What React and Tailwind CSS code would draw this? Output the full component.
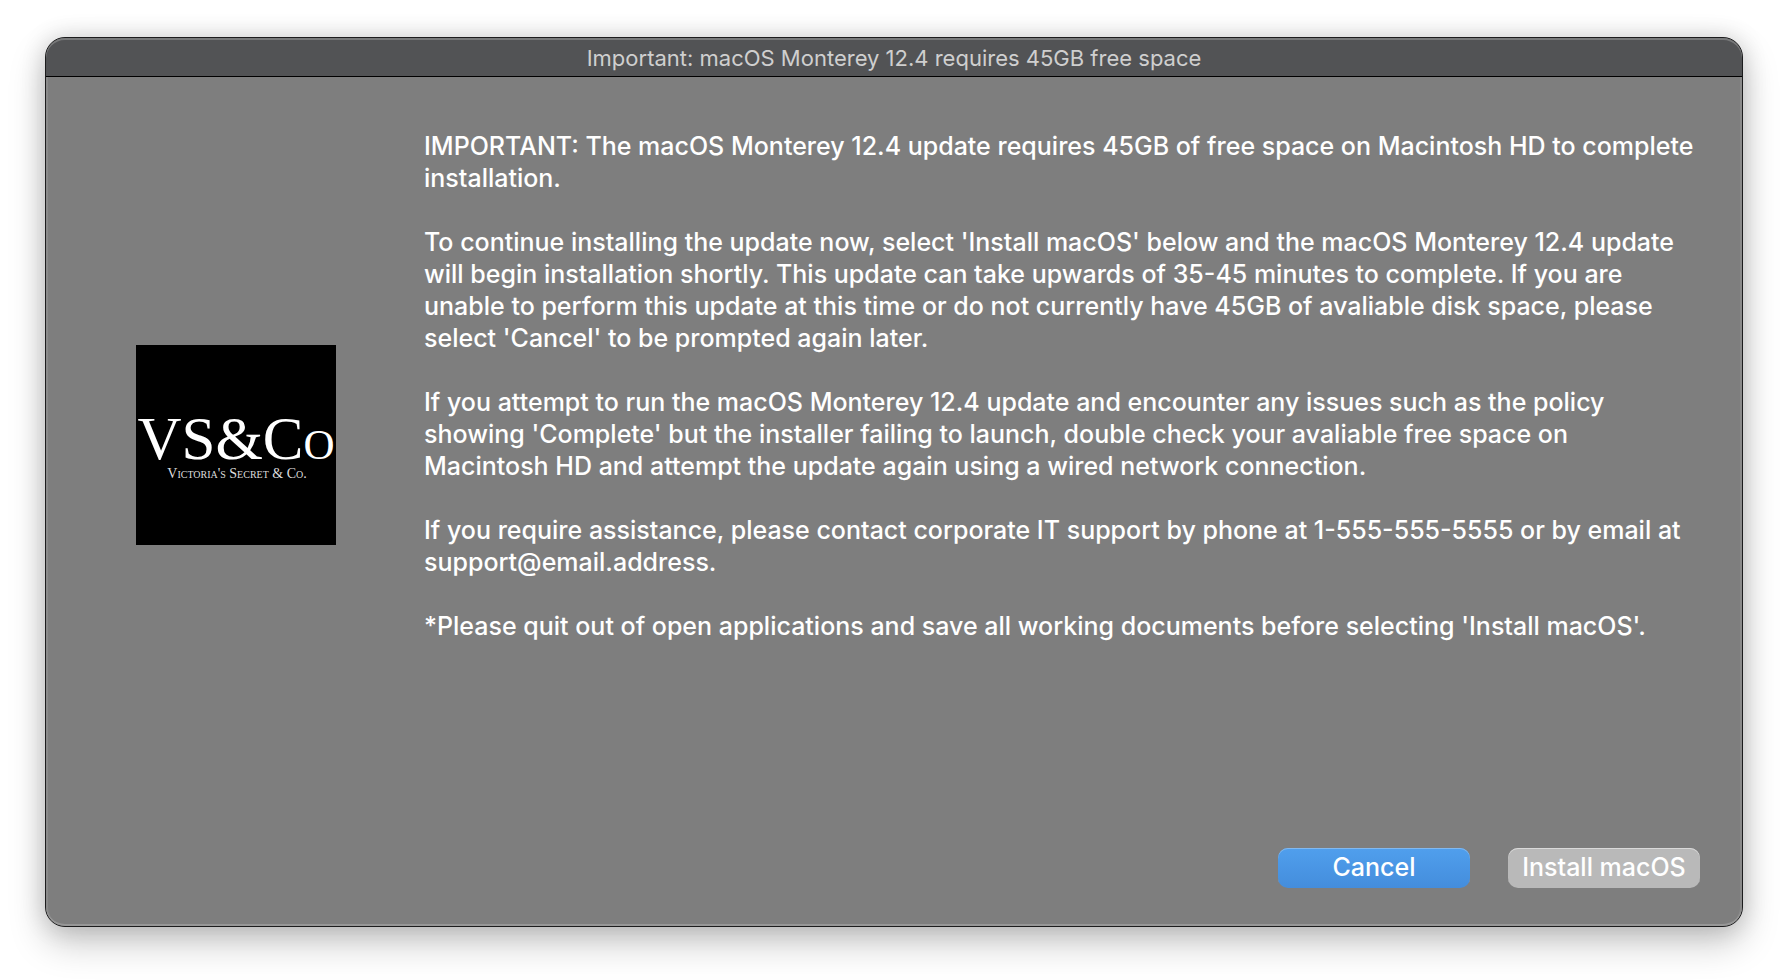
const paragraphs = [
  [
    'IMPORTANT: The macOS Monterey 12.4 update requires 45GB of free space on Macintosh HD to complete',
    'installation.',
  ],
  [
    "To continue installing the update now, select 'Install macOS' below and the macOS Monterey 12.4 update",
    'will begin installation shortly. This update can take upwards of 35-45 minutes to complete. If you are',
    'unable to perform this update at this time or do not currently have 45GB of avaliable disk space, please',
    "select 'Cancel' to be prompted again later.",
  ],
  [
    'If you attempt to run the macOS Monterey 12.4 update and encounter any issues such as the policy',
    "showing 'Complete' but the installer failing to launch, double check your avaliable free space on",
    'Macintosh HD and attempt the update again using a wired network connection.',
  ],
  [
    'If you require assistance, please contact corporate IT support by phone at 1-555-555-5555 or by email at',
    'support@email.address.',
  ],
  ["*Please quit out of open applications and save all working documents before selecting 'Install macOS'."],
];

function Logo() {
  return (
    <svg
      viewBox="0 0 200 200"
      className="size-[200px] shrink-0 bg-black [font-variant-caps:small-caps]"
      role="img"
      aria-label="VS&Co, Victoria's Secret & Co."
      fill="#fff"
      fontFamily="'Liberation Serif', serif"
      textAnchor="middle"
    >
      <text x="100" y="114" fontSize="61">
        VS&amp;Co
      </text>
      <text x="101" y="133" fontSize="14" fill="#ddd">
        Victoria's Secret &amp; Co.
      </text>
    </svg>
  );
}

export default function App() {
  return (
    <main className="min-h-screen bg-white px-[45px] pt-[37px] pb-[53px] font-['Inter',sans-serif] text-white">
      <section
        role="dialog"
        aria-labelledby="dialog-title"
        className="flex min-h-[890px] flex-col overflow-hidden rounded-[20px] border border-[#1c1c1d] bg-[#7e7e7e] shadow-[0_16px_36px_rgba(0,0,0,0.22),0_0_24px_rgba(0,0,0,0.16)]"
      >
        <header className="flex h-[39px] shrink-0 items-center justify-center rounded-t-[19px] border-b border-black bg-[#525355] pt-0.5 shadow-[inset_0_2px_0_#78797a]">
          <h1 id="dialog-title" className="text-[22px] leading-8 text-[#cfcfcf]">
            Important: macOS Monterey 12.4 requires 45GB free space
          </h1>
        </header>
        <div className="flex grow flex-col rounded-b-[19px] pr-5 pb-[38px] pl-[90px] shadow-[inset_0_-2px_0_#979797,inset_2px_0_0_#8a8a8a,inset_-2px_0_0_#8a8a8a]">
          <div className="flex grow items-center gap-[88px]">
            <div className="pb-9">
              <Logo />
            </div>
            <div className="flex grow flex-col gap-8 self-start pt-[53px] text-[25px] leading-8 font-medium whitespace-nowrap">
              {paragraphs.map((lines) => (
                <p key={lines[0]}>
                  {lines.map((line) => (
                    <span key={line} className="block">
                      {line}
                    </span>
                  ))}
                </p>
              ))}
            </div>
          </div>
          <footer className="flex justify-end gap-[38px] pr-[22px] text-[25px] leading-8 font-medium">
            <button
              type="button"
              className="h-10 w-48 rounded-[10px] bg-linear-to-b from-[#509fed] to-[#448ddc] pb-0.5 shadow-[inset_0_1px_0_#82b9f0]"
            >
              Cancel
            </button>
            <button
              type="button"
              className="h-10 w-48 rounded-[10px] bg-[#b9b9b9] pb-0.5 whitespace-nowrap shadow-[inset_0_1px_0_#dadada]"
            >
              Install macOS
            </button>
          </footer>
        </div>
      </section>
    </main>
  );
}
